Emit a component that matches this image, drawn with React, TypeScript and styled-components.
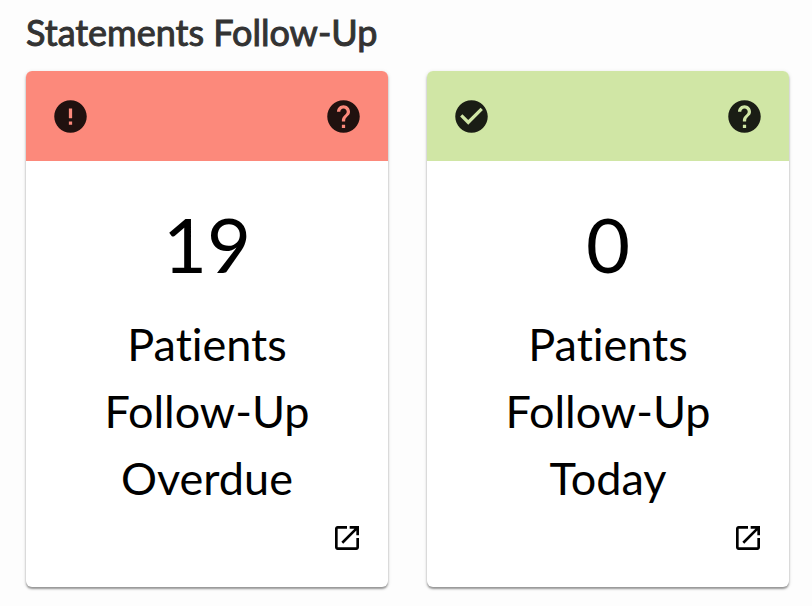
import React from "react";
import styled, { createGlobalStyle } from "styled-components";

const GlobalStyle = createGlobalStyle`
  *, *::before, *::after { box-sizing: border-box; }
  body {
    margin: 0;
    background: #fdfdfd;
    color: #000;
    font-family: Lato, "Liberation Sans", sans-serif;
    font-variant-ligatures: none;
  }
`;

const Section = styled.section`
  padding: 10px 23px 16px 26px;
`;

const Title = styled.h2`
  margin: 0 0 17px;
  color: #333;
  font-size: 36px;
  line-height: 44px;
  font-weight: 400;
  -webkit-text-stroke: 1px currentColor;
`;

const Cards = styled.div`
  display: grid;
  grid-template-columns: repeat(2, minmax(0, 1fr));
  gap: 39px;
`;

const Card = styled.article`
  display: flex;
  flex-direction: column;
  overflow: hidden;
  border-radius: 6px;
  background: #fff;
  box-shadow: 0 2px 2px rgba(0, 0, 0, 0.36), 0 1px 4px rgba(0, 0, 0, 0.12);
`;

const CardHeader = styled.header<{ $tone: string }>`
  display: flex;
  align-items: center;
  justify-content: space-between;
  height: 90px;
  padding: 0 25px;
  background: ${(p) => p.$tone};
`;

const IconButton = styled.button`
  display: flex;
  padding: 0;
  border: 0;
  background: none;
  color: inherit;
  cursor: pointer;
`;

const Icon = styled.svg<{ $size: number }>`
  display: block;
  width: ${(p) => p.$size}px;
  height: ${(p) => p.$size}px;
  fill: currentColor;
`;

const HeaderIcon = styled(Icon)`
  opacity: 0.87;
`;

const CardBody = styled.div`
  padding: 39px 72px 0;
  text-align: center;
`;

const Count = styled.p`
  margin: 0 0 23px;
  font-size: 76px;
  line-height: 88px;
`;

const Label = styled.p`
  margin: 0;
  font-size: 45px;
  line-height: 67px;
`;

const CardFooter = styled.footer`
  display: flex;
  justify-content: flex-end;
  padding: 10px 25px 33px;
`;

const paths = {
  error: "M12 2C6.48 2 2 6.48 2 12s4.48 10 10 10 10-4.48 10-10S17.52 2 12 2zm1 15h-2v-2h2v2zm0-4h-2V7h2v6z",
  check: "M12 2C6.48 2 2 6.48 2 12s4.48 10 10 10 10-4.48 10-10S17.52 2 12 2zm-2 15l-5-5 1.41-1.41L10 14.17l7.59-7.59L19 8l-9 9z",
  help: "M12 2C6.48 2 2 6.48 2 12s4.48 10 10 10 10-4.48 10-10S17.52 2 12 2zm1 17h-2v-2h2v2zm2.07-7.75l-.9.92C13.45 12.9 13 13.5 13 15h-2v-.5c0-1.1.45-2.1 1.17-2.83l1.24-1.26c.37-.36.59-.86.59-1.41 0-1.1-.9-2-2-2s-2 .9-2 2H8c0-2.21 1.79-4 4-4s4 1.79 4 4c0 .88-.36 1.68-.93 2.25z",
  open: "M19 19H5V5h7V3H5c-1.11 0-2 .9-2 2v14c0 1.1.89 2 2 2h14c1.1 0 2-.9 2-2v-7h-2v7zM14 3v2h3.59l-9.83 9.83 1.41 1.41L19 6.41V10h2V3h-7z",
};

interface Statement {
  status: "error" | "check";
  tone: string;
  count: number;
  label: string;
}

const statements: Statement[] = [
  { status: "error", tone: "#fc897b", count: 19, label: "Patients Follow-Up Overdue" },
  { status: "check", tone: "#d0e6a5", count: 0, label: "Patients Follow-Up Today" },
];

function StatementCard({ status, tone, count, label }: Statement) {
  return (
    <Card>
      <CardHeader $tone={tone}>
        <HeaderIcon $size={39} viewBox="0 0 24 24" aria-hidden="true">
          <path d={paths[status]} />
        </HeaderIcon>
        <IconButton type="button" aria-label={`Help: ${label}`}>
          <HeaderIcon $size={39} viewBox="0 0 24 24" aria-hidden="true">
            <path d={paths.help} />
          </HeaderIcon>
        </IconButton>
      </CardHeader>
      <CardBody>
        <Count>{count}</Count>
        <Label>{label}</Label>
      </CardBody>
      <CardFooter>
        <IconButton type="button" aria-label={`Open: ${label}`}>
          <Icon $size={32} viewBox="0 0 24 24" aria-hidden="true">
            <path d={paths.open} />
          </Icon>
        </IconButton>
      </CardFooter>
    </Card>
  );
}

export default function App() {
  return (
    <>
      <GlobalStyle />
      <Section>
        <Title>Statements Follow-Up</Title>
        <Cards>
          {statements.map((s) => (
            <StatementCard key={s.label} {...s} />
          ))}
        </Cards>
      </Section>
    </>
  );
}
